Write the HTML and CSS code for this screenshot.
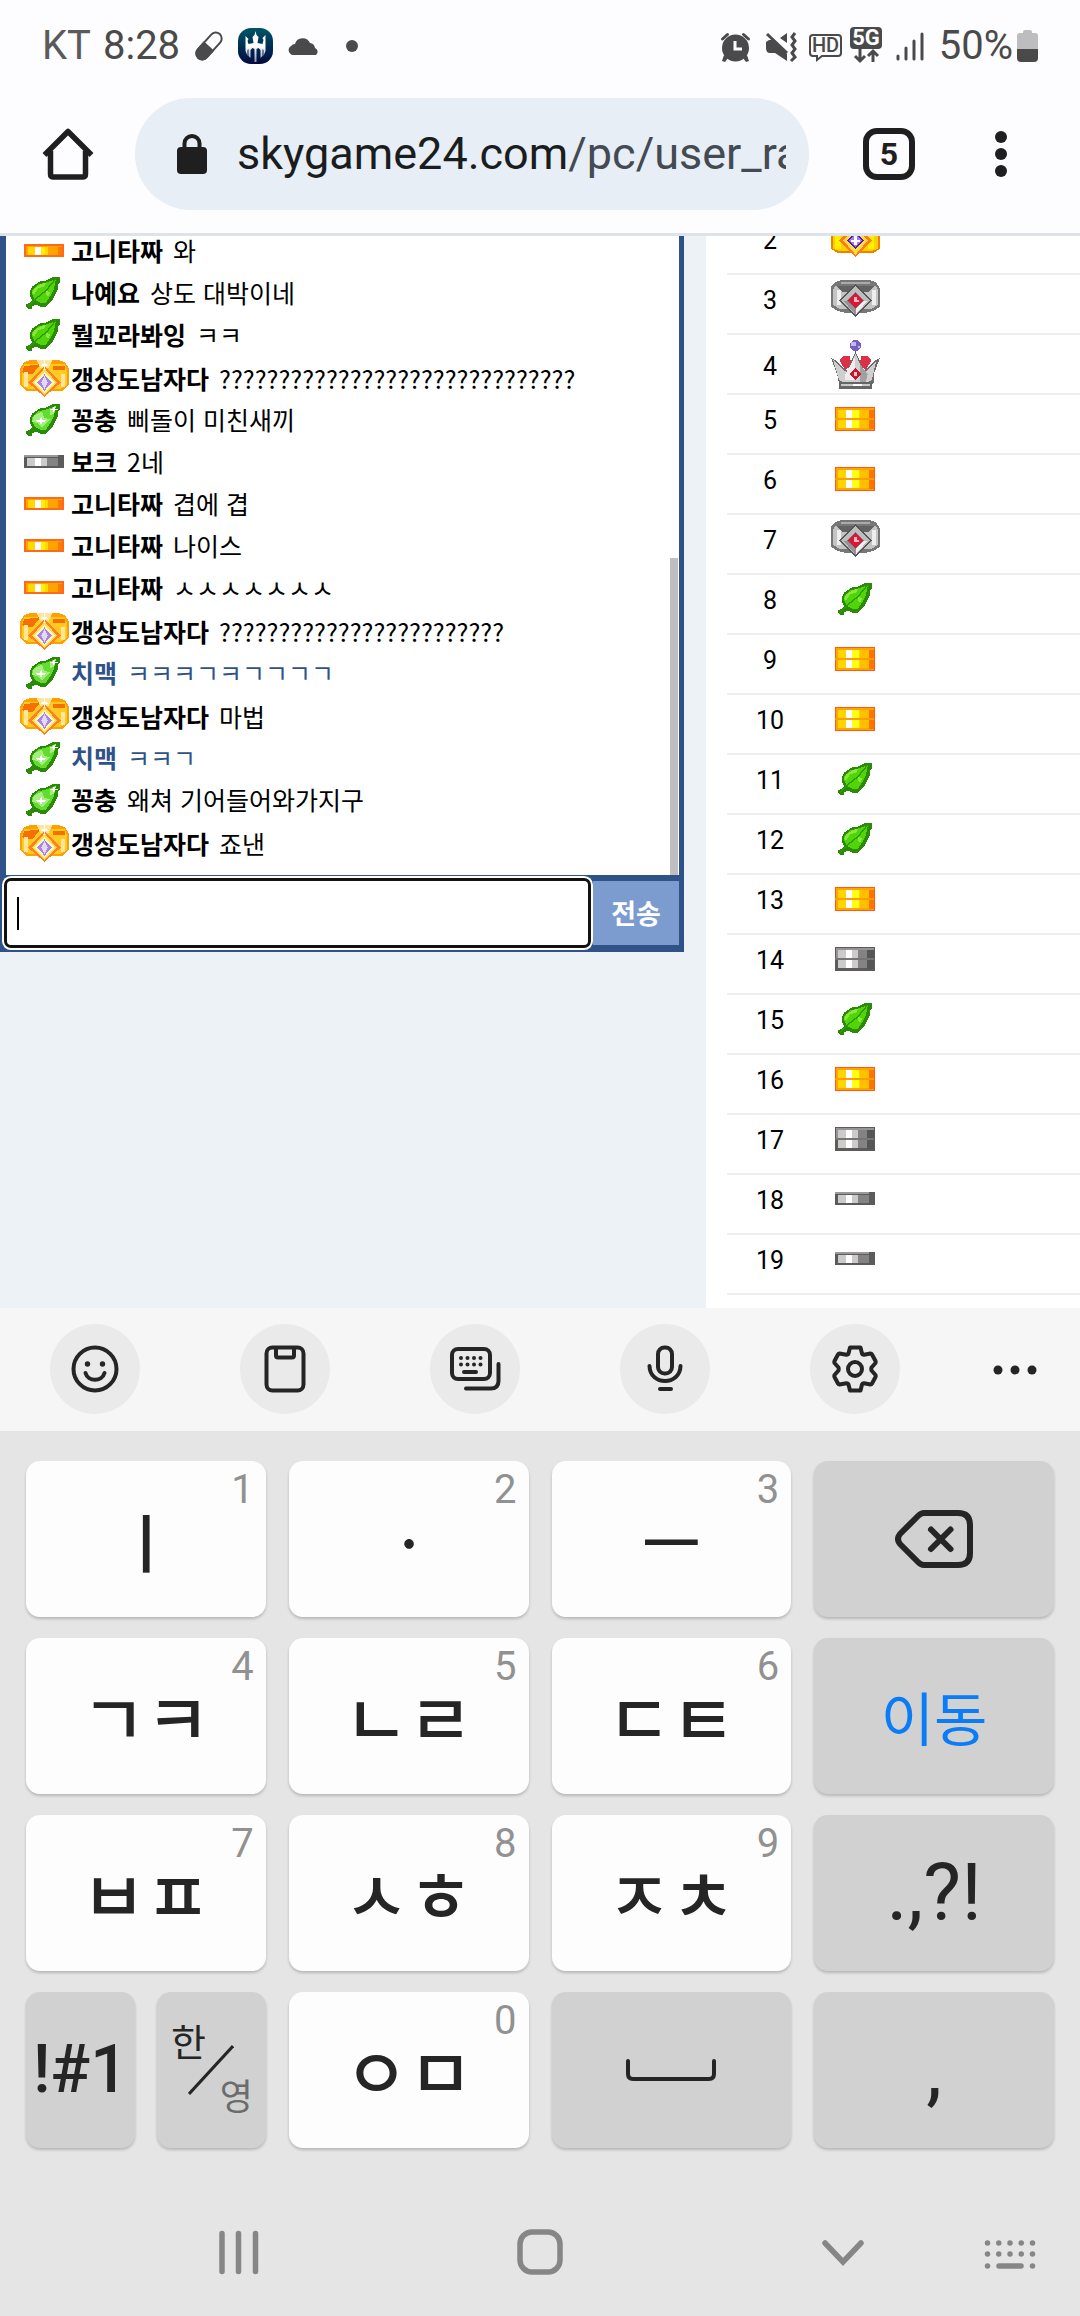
FILE: index.html
```html
<!DOCTYPE html>
<html lang="ko">
<head>
<meta charset="utf-8">
<meta name="viewport" content="width=device-width, initial-scale=1">
<title>skygame24.com</title>
<link rel="stylesheet" href="styles.css">
</head>
<body>
<svg class="defs" aria-hidden="true">
  <linearGradient id="app-bg" x1="0" y1="0" x2="0" y2="1"><stop offset="0" stop-color="#005566"/><stop offset="1" stop-color="#000a40"/></linearGradient>
  <linearGradient id="app-fg" x1="0" y1="0" x2="0" y2="1"><stop offset="0.5" stop-color="#fff"/><stop offset="1" stop-color="#8e97b5"/></linearGradient>
  <symbol id="leaf" viewBox="0 0 17 16">
    <path fill="#2b8a06" d="M17 0v3l-1 1v2l-1 2-1 2-1 2-2 2-1 1H7l-2-1-2 1v1H1l-1-1v-1l2-1 1-1-1-2V7l1-2 3-2 2-1h2l2-1 2-1z"/>
    <path fill="#52d507" d="M15 1l-1 5-2 4-2 3H7l-2-1-1-1-1-2V7l1-1 2-2 4-1 3-1z"/>
    <path fill="#8ae63f" d="M4 6l3-2 3-1-1 2-3 1-2 3-1-1zM10 7l2 1-1 2-1-1z"/>
    <path fill="none" stroke="#2f9a08" stroke-width=".7" d="M1 15l4-4 5-4 5-6"/>
  </symbol>
  <symbol id="leaf-shine" viewBox="0 0 17 16">
    <path fill="#2b8a06" d="M17 0v3l-1 1v2l-1 2-1 2-1 2-2 2-1 1H7l-2-1-2 1v1H1l-1-1v-1l2-1 1-1-1-2V7l1-2 3-2 2-1h2l2-1 2-1z"/>
    <path fill="#63dc31" d="M15 1l-1 5-2 4-2 3H7l-2-1-1-1-1-2V7l1-1 2-2 4-1 3-1z"/>
    <path fill="#a4ee7c" d="M4 6l4-2 1 3 3 1-2 2-2 2-2-2-3-1zM12 3l3-2-1 4-2 1z"/>
    <path fill="#fff" d="M7.500 6l.5 2 3 .7-3 .6-.5 2-.5-2-3-.6 3-.7zM14 1l.4 1.600L16 3l-1.600.4L14 5l-.4-1.600L12 3l1.600-.4z"/>
  </symbol>
  <symbol id="bar-gold" viewBox="0 0 40 13">
    <path fill="#ff6a1a" d="M0 0h40v13H0z"/><path fill="#ffa400" d="M2 2h36v9H2z"/><path fill="#ffd800" d="M4 3h20v8H4z"/><path fill="#fff200" d="M17 3h4v8h-4z"/><path fill="#fff" d="M11 3h6v8h-6z"/><path fill="#ff7a00" d="M34 3h4v8h-4z"/>
  </symbol>
  <symbol id="bar-silver" viewBox="0 0 40 13">
    <path fill="#5b5b5b" d="M0 0h40v13H0z"/><path fill="#9a9a9a" d="M0 0h34v2H0z"/><path fill="#cdcaca" d="M3 3h22v8H3z"/><path fill="#fff" d="M11 3h6v8h-6z"/><path fill="#848282" d="M23 3h11v8H23z"/>
  </symbol>
  <symbol id="bar2-gold" viewBox="0 0 40 24">
    <path fill="#ff5c12" d="M0 0h40v24H0z"/><path fill="#ffa300" d="M1 1h38v22H1z"/><path fill="#ffd500" d="M3 3h25v18H3z"/><path fill="#ffff14" d="M17 3h7v18h-7z"/><path fill="#fff" d="M11 3h6v18h-6z"/><path fill="#ffc000" d="M25 3h9v18h-9z"/><path fill="#ff7400" d="M34 3h5v19h-5z"/><path fill="#ff9d00" d="M0 11h39v2H0z"/>
  </symbol>
  <symbol id="bar2-silver" viewBox="0 0 40 24">
    <path fill="#5b5b5b" d="M0 0h40v24H0z"/><path fill="#969494" d="M1 1h38v10H1z"/><path fill="#cdcaca" d="M3 3h22v18H3z"/><path fill="#fff" d="M11 3h6v18h-6z"/><path fill="#848282" d="M23 3h11v18H23z"/><path fill="#555" d="M32 3h7v19h-7z"/><path fill="#757575" d="M0 11h39v2H0z"/>
  </symbol>
  <symbol id="ring-gold" viewBox="0 0 24 18">
    <path fill="#f08000" d="M2 1l3-1h14l3 1 2 3v10l-3 2H3l-3-2V4z"/>
    <path fill="#ffd000" d="M2 3h20l1 2v9l-3 1H4l-3-1V5z"/>
    <path fill="#ffef00" d="M2 6h3v8H2zM18 6h3v8h-3z"/>
    <path fill="#f45a00" d="M4 2h16v3H4z"/>
    <path fill="#ff7a1c" d="M12 2l8 8-8 8-8-8z"/>
    <path fill="#ffdc3c" d="M12 4l6 6-6 7-6-7z"/>
    <path fill="#4b1dc0" d="M12 6l4 4-4 4-4-4z"/><path fill="#a57bea" d="M12 7l3 3-3 3-3-3z"/><path fill="#fff" d="M11.500 8h1v4h-1zM10 9.500h4v1h-4z"/>
  </symbol>
  <symbol id="ring-shine" viewBox="0 0 24 18">
    <path fill="#ffa000" d="M2 1l3-1h14l3 1 2 3v8l-3 3H3l-3-3V4z"/>
    <path fill="#ffcb22" d="M2 2h20l1 3v7l-3 2H4l-3-2V5z"/>
    <path fill="#f47000" d="M2 3l8-1-4 5-5-1zM16 3h6v2h-6z"/>
    <path fill="#ffe69c" d="M8 0h8l-2 4h-4zM2 6h2v7H2zM20 7h2v6h-2z"/>
    <path fill="#ff8020" d="M12 3l8 8-8 7-8-7z"/>
    <path fill="#ffe04a" d="M12 4l6 7-6 6-6-6z"/>
    <path fill="#fff3c4" d="M12 6l5 5-5 5-5-5z"/>
    <path fill="#a586e0" d="M12 7l3.500 4-3.500 4-3.500-4z"/><path fill="#e4d8fa" d="M12 8l1.500 3-1.500 3-1.500-3z"/>
    <path fill="#fff" d="M12 0l.5 2 2 .5-2 .5-.5 2-.5-2-2-.5 2-.5z"/>
  </symbol>
  <symbol id="ring-silver" viewBox="0 0 24 18">
    <path fill="#777" d="M2 1l3-1h14l3 1 2 3v9l-3 2-4 1H7l-4-1-3-2V3z"/>
    <path fill="#c4c4c4" d="M2 3h20l1 2v7l-3 2H4l-3-2V5z"/>
    <path fill="#efefef" d="M3 5h2v7H3zM20 5h2v7h-2z"/>
    <path fill="#aaa" d="M5 1h14v1H5z"/><path fill="#626262" d="M3 3h18l-3 3H6z"/>
    <path fill="#555" d="M12 2l8 8-8 8-8-8z"/>
    <path fill="#bdbdbd" d="M12 3l7 7-7 7-7-7z"/><path fill="#efefef" d="M12 10h6l-6 7z"/><path fill="#949494" d="M12 10v7l-6-7z"/>
    <path fill="#777" d="M12 6l4 4-4 4-4-4z"/><path fill="#e01535" d="M12 6.500l3.500 3.500-3.500 3.500L8.500 10z"/><path fill="#ffb9c2" d="M11.500 8.500h1v1h1v1h-2z"/>
  </symbol>
  <symbol id="crown" viewBox="0 0 24 24">
    <path fill="#db3045" d="M4 10l2-2h3l1 4-3 3zM20 10l-2-2h-3l-1 4 3 3z"/>
    <path fill="#6d6d6d" d="M0 9l2 1 4 4 2 1 3-7 1-2 1 2 3 7 2-1 4-4 2-1-3 8v4l-1 1H4l-1-5z"/>
    <path fill="#cfcfcf" d="M1 10l5 5 2 1 4-9 4 9 2-1 4-4-2 9-2 1H6l-2-1z"/>
    <path fill="#ededed" d="M7 17l5-9-1 12H7z"/><path fill="#a0a0a0" d="M14 12l4 5-1 4h-3z"/>
    <path fill="#666" d="M4 21h16v3H4z"/><path fill="#c9c9c9" d="M5 22h14v1H5z"/><path fill="#fff" d="M11 22h4v1h-4z"/>
    <circle cx="12" cy="3" r="2.700" fill="#7360c4"/><path fill="#c5b9f0" d="M10 1h2v2h-2zM13 3h1v1h-1z"/><path fill="#5a4bb0" d="M11.600 5.500h.8V7h-.8z"/>
    <path fill="#c9142f" d="M12 14l3 3-3 3-3-3z"/><path fill="#efc0c6" d="M11.500 16h1v2h-1z"/>
  </symbol>
</svg>

<div class="screen">
  <header class="status">
    <div class="status-left">
      <span class="carrier">KT</span>
      <time class="clock">8:28</time>
      <svg class="s-pill" viewBox="0 0 30 30"><g transform="rotate(-48 15 15)"><rect x="-1" y="9" width="32" height="12" rx="6" fill="none" stroke="#4a4a4a" stroke-width="2"/><path fill="#4a4a4a" d="M15 8H5a7 7 0 0 0 0 14h10z"/></g></svg>
      <svg class="s-app" viewBox="0 0 35 36"><rect width="35" height="36" rx="13" fill="url(#app-bg)"/><path fill="url(#app-fg)" d="M17.500 3l1 4 2 2-1 6 5 1 1-4-1-2 3-3v16l-2 5v-6l-1-1v7l-2 2v-8l-2-2-2 1v13h-2V21l-2-1-2 2v8l-2-2v-7l-1 1v6l-2-5V8l3 3-1 2 1 3 5-1-1-6 2-2z"/></svg>
      <svg class="s-cloud" viewBox="0 0 33 20"><path fill="#4a4a4a" d="M5 19a5 5 0 0 1-1-9 5 5 0 0 1 4-2 8 8 0 0 1 15-1 6 6 0 0 1 5 5 4 4 0 0 1 1 7z"/></svg>
      <svg class="s-dot" viewBox="0 0 12 12"><circle cx="6" cy="6" r="6" fill="#4a4a4a"/></svg>
    </div>
    <div class="status-right">
      <svg class="s-icon" viewBox="0 0 44 36"><g fill="#4a4a4a"><circle cx="22.500" cy="20" r="13.500"/><path d="M11 27l4 3-3 4-3-1zM34 27l-4 3 3 4 3-1z"/></g><path fill="none" stroke="#4a4a4a" stroke-width="3" stroke-linecap="round" d="M9.500 11l5-4.500M35.500 11l-5-4.500"/><path fill="none" stroke="#fdfdff" stroke-width="3" d="M22 13v8h7"/></svg>
      <svg class="s-icon" viewBox="0 0 44 36"><path fill="#4a4a4a" d="M30 5v10l-7-5zM9 14l3-2h3l15 14v7L18 25h-5q-4 0-4-5z"/><path fill="none" stroke="#4a4a4a" stroke-width="3" d="M10 6l20 19M38 5l-3 4 3 4-3 4 3 4-3 4 3 4-4 4"/></svg>
      <svg class="s-icon" viewBox="0 0 44 36"><path fill="none" stroke="#4a4a4a" stroke-width="2" d="M12 7h25q3 0 3 3v15q0 3-3 3H21l-5 4v-4h-4q-3 0-3-3V10q0-3 3-3z"/><text class="hd" x="24.500" y="24" text-anchor="middle">HD</text></svg>
      <svg class="s-icon" viewBox="0 0 44 36"><rect x="5" y="-1" width="32" height="22" rx="4" fill="#4a4a4a"/><text class="fiveg" x="21" y="17" text-anchor="middle">5G</text><path fill="none" stroke="#4a4a4a" stroke-width="3" d="M15 21v12M10 28l5 5 5-5M28 34V23M23 28l5-5 5 5"/></svg>
      <svg class="s-icon" viewBox="0 0 44 36"><path stroke="#4a4a4a" stroke-width="3" stroke-linecap="round" d="M9 28v3M17 20v11M25 13v18M33 6v25"/></svg>
      <span class="battery-text">50%</span>
      <svg class="s-battery" viewBox="0 0 21 32"><path fill="#bdbdc0" d="M6 2q0-2 2-2h5q2 0 2 2v1h3q3 0 3 3v13H0V6q0-3 3-3h3z"/><path fill="#4a4a4a" d="M0 19h21v9q0 4-4 4H4q-4 0-4-4z"/></svg>
    </div>
  </header>

  <nav class="browser" aria-label="브라우저">
    <button class="bare" aria-label="홈"><svg class="i-home" viewBox="0 0 52 52"><path fill="none" stroke="#1f1f1f" stroke-width="5.500" stroke-linejoin="round" d="M2.500 27L26 3.500 49.500 27"/><path fill="none" stroke="#1f1f1f" stroke-width="5.500" stroke-linejoin="round" d="M8.500 23v23q0 3 3 3h29q3 0 3-3V23"/></svg></button>
    <div class="omnibox">
      <svg class="i-lock" viewBox="0 0 30 40"><rect y="13" width="30" height="27" rx="4" fill="#1f1f1f"/><path fill="none" stroke="#1f1f1f" stroke-width="4" d="M7.500 14V9.500a7.500 7.500 0 0 1 15 0V14"/></svg>
      <span class="url">skygame24.com<span class="path">/pc/user_ra</span></span>
    </div>
    <button class="bare tabs" aria-label="탭"><span class="tab-count">5</span></button>
    <button class="bare" aria-label="메뉴"><svg class="i-menu" viewBox="0 0 12 46"><g fill="#1f1f1f"><circle cx="6" cy="6" r="6"/><circle cx="6" cy="23" r="6"/><circle cx="6" cy="40" r="6"/></g></svg></button>
  </nav>

  <main class="page">
    <section class="chat-col">
      <div class="chat">
        <div class="log">
          <ul class="messages">
            <li><svg class="badge bar"><use href="#bar-gold"/></svg><b>고니타짜</b><span>와</span></li>
            <li><svg class="badge leaf"><use href="#leaf"/></svg><b>나예요</b><span>상도 대박이네</span></li>
            <li><svg class="badge leaf"><use href="#leaf"/></svg><b>뭘꼬라봐잉</b><span>ㅋㅋ</span></li>
            <li class="tall"><svg class="badge ring"><use href="#ring-shine"/></svg><b>갱상도남자다</b><span>??????????????????????????????</span></li>
            <li><svg class="badge leaf"><use href="#leaf-shine"/></svg><b>꽁충</b><span>삐돌이 미친새끼</span></li>
            <li><svg class="badge bar"><use href="#bar-silver"/></svg><b>보크</b><span>2네</span></li>
            <li><svg class="badge bar"><use href="#bar-gold"/></svg><b>고니타짜</b><span>겹에 겹</span></li>
            <li><svg class="badge bar"><use href="#bar-gold"/></svg><b>고니타짜</b><span>나이스</span></li>
            <li><svg class="badge bar"><use href="#bar-gold"/></svg><b>고니타짜</b><span>ㅅㅅㅅㅅㅅㅅㅅ</span></li>
            <li class="tall"><svg class="badge ring"><use href="#ring-shine"/></svg><b>갱상도남자다</b><span>????????????????????????</span></li>
            <li class="blue"><svg class="badge leaf"><use href="#leaf-shine"/></svg><b>치맥</b><span>ㅋㅋㅋㄱㅋㄱㄱㄱㄱ</span></li>
            <li class="tall"><svg class="badge ring"><use href="#ring-shine"/></svg><b>갱상도남자다</b><span>마법</span></li>
            <li class="blue"><svg class="badge leaf"><use href="#leaf-shine"/></svg><b>치맥</b><span>ㅋㅋㄱ</span></li>
            <li><svg class="badge leaf"><use href="#leaf-shine"/></svg><b>꽁충</b><span>왜쳐 기어들어와가지구</span></li>
            <li class="tall"><svg class="badge ring"><use href="#ring-shine"/></svg><b>갱상도남자다</b><span>죠낸</span></li>
          </ul>
          <div class="scroll-thumb"></div>
        </div>
        <form class="compose">
          <input class="compose-input" type="text" aria-label="메시지">
          <button class="send" type="button">전송</button>
        </form>
      </div>
    </section>
    <section class="rank-col">
      <table class="ranks">
        <tbody>
          <tr><td class="num">2</td><td class="tier"><svg class="badge ring"><use href="#ring-gold"/></svg></td><td></td></tr>
          <tr><td class="num">3</td><td class="tier"><svg class="badge ring"><use href="#ring-silver"/></svg></td><td></td></tr>
          <tr class="crowned"><td class="num">4</td><td class="tier"><svg class="badge crown"><use href="#crown"/></svg></td><td></td></tr>
          <tr><td class="num">5</td><td class="tier"><svg class="badge bar2"><use href="#bar2-gold"/></svg></td><td></td></tr>
          <tr><td class="num">6</td><td class="tier"><svg class="badge bar2"><use href="#bar2-gold"/></svg></td><td></td></tr>
          <tr><td class="num">7</td><td class="tier"><svg class="badge ring"><use href="#ring-silver"/></svg></td><td></td></tr>
          <tr><td class="num">8</td><td class="tier"><svg class="badge leaf"><use href="#leaf"/></svg></td><td></td></tr>
          <tr><td class="num">9</td><td class="tier"><svg class="badge bar2"><use href="#bar2-gold"/></svg></td><td></td></tr>
          <tr><td class="num">10</td><td class="tier"><svg class="badge bar2"><use href="#bar2-gold"/></svg></td><td></td></tr>
          <tr><td class="num">11</td><td class="tier"><svg class="badge leaf"><use href="#leaf"/></svg></td><td></td></tr>
          <tr><td class="num">12</td><td class="tier"><svg class="badge leaf"><use href="#leaf"/></svg></td><td></td></tr>
          <tr><td class="num">13</td><td class="tier"><svg class="badge bar2"><use href="#bar2-gold"/></svg></td><td></td></tr>
          <tr><td class="num">14</td><td class="tier"><svg class="badge bar2"><use href="#bar2-silver"/></svg></td><td></td></tr>
          <tr><td class="num">15</td><td class="tier"><svg class="badge leaf"><use href="#leaf"/></svg></td><td></td></tr>
          <tr><td class="num">16</td><td class="tier"><svg class="badge bar2"><use href="#bar2-gold"/></svg></td><td></td></tr>
          <tr><td class="num">17</td><td class="tier"><svg class="badge bar2"><use href="#bar2-silver"/></svg></td><td></td></tr>
          <tr><td class="num">18</td><td class="tier"><svg class="badge bar"><use href="#bar-silver"/></svg></td><td></td></tr>
          <tr><td class="num">19</td><td class="tier"><svg class="badge bar"><use href="#bar-silver"/></svg></td><td></td></tr>
        </tbody>
      </table>
    </section>
  </main>

  <section class="keyboard" aria-label="키보드">
    <div class="tools">
      <button class="tool" aria-label="이모지"><svg viewBox="-24 -24 48 48"><g fill="none" stroke="#252525" stroke-width="4" stroke-linecap="round"><circle r="21.500"/><path d="M-9.500 4C-7 13 7 13 9.500 4"/></g><g fill="#252525"><circle cx="-7.500" cy="-5" r="2.700"/><circle cx="7.500" cy="-5" r="2.700"/></g></svg></button>
      <button class="tool" aria-label="클립보드"><svg viewBox="-24 -24 48 48"><g fill="none" stroke="#252525" stroke-width="4"><rect x="-18.500" y="-21.500" width="37" height="43" rx="6"/><path d="M-9-21v7.500q0 2 2 2H7q2 0 2-2V-21"/></g></svg></button>
      <button class="tool" aria-label="키보드 모드"><svg viewBox="-26 -24 52 48"><g fill="none" stroke="#252525" stroke-width="4" stroke-linecap="round"><rect x="-23" y="-20" width="38" height="30" rx="6"/><path d="M23.500-5v17q0 7.500-8 7.500H-9"/><path d="M-11 3H1"/></g><g fill="#252525"><circle cx="-14" cy="-11" r="2"/><circle cx="-7.500" cy="-11" r="2"/><circle cx="-1" cy="-11" r="2"/><circle cx="5.500" cy="-11" r="2"/><circle cx="-14" cy="-4.500" r="2"/><circle cx="-7.500" cy="-4.500" r="2"/><circle cx="-1" cy="-4.500" r="2"/><circle cx="5.500" cy="-4.500" r="2"/></g></svg></button>
      <button class="tool" aria-label="음성 입력"><svg viewBox="-24 -24 48 48"><g fill="none" stroke="#252525" stroke-width="4" stroke-linecap="round"><rect x="-7" y="-21.500" width="14" height="26" rx="6.500"/><path d="M-15.500-3C-15 17 15 17 15.500-3M-5 20H6"/></g></svg></button>
      <button class="tool" aria-label="설정"><svg viewBox="-24 -24 48 48"><g fill="none" stroke="#252525" stroke-width="4" stroke-linejoin="round"><circle r="7"/><path d="M-5-21.500H5.500L7-15.500Q7.500-14 9-14.200L15.500-15.500Q16.500-15.500 17-14.500L20.500-8Q21-7 20.500-6L16.500-1.500Q16 0 16.500 1.500L20.500 6Q21 7 20.500 8L17 14.500Q16.500 15.500 15.500 15.500L9 14.200Q7.500 14 7 15.500L5.500 21.500H-5L-6.500 15.500Q-7 14-8.500 14.200L-15.500 15.500Q-16.500 15.500-17 14.500L-20.500 8Q-21 7-20.500 6L-16.500 1.500Q-16 0-16.500-1.500L-20.500-6Q-21-7-20.500-8L-17-14.500Q-16.500-15.500-15.500-15.500L-8.500-14.200Q-7-14-6.500-15.500Z"/></g></svg></button>
      <button class="tool plain" aria-label="더보기"><svg viewBox="-24 -24 48 48"><g fill="#252525"><circle cx="-17" cy="1" r="4.500"/><circle cy="1" r="4.500"/><circle cx="17" cy="1" r="4.500"/></g></svg></button>
    </div>
    <div class="keys">
      <button class="key vowel">ㅣ<span class="hint">1</span></button>
      <button class="key vowel">ㆍ<span class="hint">2</span></button>
      <button class="key vowel">ㅡ<span class="hint">3</span></button>
      <button class="key dark" aria-label="지우기"><svg class="i-del" viewBox="0 0 78 58"><g fill="none" stroke="#252525" stroke-width="6" stroke-linecap="round" stroke-linejoin="round"><path d="M29 3H63q12 0 12 12V43q0 12-12 12H29Q26 55 23 52L5 34Q1 29 5 24L23 6Q26 3 29 3Z"/><path d="M36 19.500L55.500 39M55.500 19.500L36 39"/></g></svg></button>
      <button class="key">ㄱㅋ<span class="hint">4</span></button>
      <button class="key">ㄴㄹ<span class="hint">5</span></button>
      <button class="key">ㄷㅌ<span class="hint">6</span></button>
      <button class="key dark go">이동</button>
      <button class="key">ㅂㅍ<span class="hint">7</span></button>
      <button class="key">ㅅㅎ<span class="hint">8</span></button>
      <button class="key">ㅈㅊ<span class="hint">9</span></button>
      <button class="key dark punct">.,?!</button>
      <div class="pair">
        <button class="key dark symbols">!#1</button>
        <button class="key dark lang"><span class="ko">한</span><svg class="slash" viewBox="0 0 46 50"><path stroke="#252525" stroke-width="3" d="M1 49L45 1"/></svg><span class="en">영</span></button>
      </div>
      <button class="key">ㅇㅁ<span class="hint">0</span></button>
      <button class="key dark" aria-label="스페이스"><svg class="i-space" viewBox="0 0 90 22"><path fill="none" stroke="#252525" stroke-width="4" stroke-linecap="round" d="M2 2v13q0 5 5 5h76q5 0 5-5V2"/></svg></button>
      <button class="key dark punct">,</button>
    </div>
    <div class="system-nav">
      <button class="bare" aria-label="최근 앱"><svg class="i-nav" viewBox="-24 -24 48 48"><path stroke="#868686" stroke-width="5.500" stroke-linecap="round" d="M-16-18.500v38M.5-18.500v38M17.500-18.500v38"/></svg></button>
      <button class="bare" aria-label="홈"><svg class="i-nav" viewBox="-24 -24 48 48"><rect x="-20" y="-20" width="40" height="40" rx="12" fill="none" stroke="#868686" stroke-width="5.500"/></svg></button>
      <button class="bare hide-key" aria-label="닫기"><svg class="i-nav" viewBox="-24 -24 48 48"><path fill="none" stroke="#868686" stroke-width="5.500" stroke-linecap="round" d="M-18-9L0 10 18-9"/></svg></button>
      <button class="bare" aria-label="키보드 선택"><svg class="i-kbd" viewBox="0 0 52 36"><g fill="none" stroke="#868686" stroke-width="5.500" stroke-linecap="round"><path stroke-dasharray="0 11.250" d="M3.500 9h46M3.500 20h46"/><path d="M3.500 32h0M48.500 32h0M15 32h22"/></g></svg></button>
    </div>
  </section>
</div>
</body>
</html>
```
FILE: styles.css
```css
* { box-sizing: border-box; }
body { margin: 0; font-family: Roboto, "Noto Sans CJK KR", sans-serif; background: #e5e5e5; color: #000; }
button { font: inherit; color: inherit; border: 0; padding: 0; margin: 0; background: none; }
svg { display: block; flex: none; }
.defs { position: absolute; width: 0; height: 0; }
.screen { min-height: 100vh; display: flex; flex-direction: column; }
.bare { display: flex; align-items: center; justify-content: center; height: 100%; width: 100%; }

/* status bar */
.status { height: 92px; padding: 0 42px; display: flex; justify-content: space-between; align-items: center; background: #fdfdff; color: #4a4a4a; font-size: 40px; line-height: 48px; }
.status-left, .status-right { display: flex; align-items: center; }
.status-left { gap: 14px; }
.carrier { margin-right: -2px; color: #5a5a5a; }
.s-pill { width: 30px; height: 30px; overflow: visible; }
.s-app { width: 35px; height: 36px; }
.s-cloud { width: 33px; height: 20px; }
.s-dot { width: 12px; height: 12px; margin-left: 12px; }
.s-icon { width: 44px; height: 36px; overflow: visible; }
.s-battery { width: 21px; height: 32px; margin-left: 4px; }
.battery-text { margin-left: 6px; }
.hd { font: 500 20px Roboto, sans-serif; fill: #4a4a4a; }
.fiveg { font: 700 22px Roboto, sans-serif; fill: #fdfdff; }

/* browser toolbar */
.browser { height: 144px; padding: 6px 47px 23px 0; display: grid; grid-template-columns: 135px 1fr 160px 64px; background: #fdfdff; border-bottom: 3px solid #dee2e9; }
.i-home { width: 52px; height: 52px; }
.omnibox { min-width: 0; padding: 0 23px 0 42px; display: flex; align-items: center; gap: 30px; border-radius: 56px; background: #e7eef5; }
.i-lock { width: 30px; height: 40px; }
.url { flex: 1; min-width: 0; overflow: hidden; white-space: nowrap; font-size: 45px; line-height: 56px; color: #1a1d20; }
.path { color: #434a52; }
.tab-count { width: 52px; height: 52px; border: 6px solid #1f1f1f; border-radius: 14px; font-size: 32px; font-weight: 700; line-height: 40px; text-align: center; color: #1f1f1f; }
.i-menu { width: 12px; height: 46px; }

/* web page */
.page { flex: 1; min-height: 0; display: grid; grid-template-columns: 706fr 374fr; background: #edf2f6; }
.chat-col { padding-right: 22px; min-width: 0; }
.chat { background: #2f5388; padding: 0 5px 7px 6px; }
.log { display: flex; justify-content: space-between; height: 639px; background: #fff; overflow: hidden; padding-right: 1px; }
.messages { list-style: none; margin: 0; padding: 0 0 12px 14px; display: flex; flex-direction: column; justify-content: flex-end; font-family: "Noto Sans CJK KR", sans-serif; font-size: 25px; line-height: 28px; }
.messages li { flex: none; height: 42px; display: flex; align-items: center; white-space: nowrap; }
.messages .tall { height: 43px; padding-top: 3px; }
.messages b { margin: 0 10px 0 2px; }
.messages .blue { color: #2f5388; }
.scroll-thumb { width: 8px; height: 317px; align-self: flex-end; background: #bfbfbf; }
.badge { shape-rendering: crispEdges; }
.messages .bar { margin: 0 5px 0 4px; }
.messages .leaf { margin: 0 9px 0 6px; }
.badge.bar { width: 40px; height: 13px; }
.badge.bar2 { width: 40px; height: 24px; }
.badge.leaf { width: 34px; height: 33px; }
.badge.ring { width: 49px; height: 37px; }
.badge.crown { width: 49px; height: 50px; }
.compose { display: flex; margin: 0; padding-top: 6px; gap: 5px; }
.compose-input { flex: 1; min-width: 0; height: 64px; margin-left: 1px; border: 0; border-radius: 4px; outline: 0; padding: 0 12px; font-size: 25px; background: #fff linear-gradient(#000, #000) no-repeat 10px 16px / 2px 33px; box-shadow: 0 0 0 3px #121212, 0 0 0 5px #fff; }
.send { width: 86px; height: 64px; background: #7c9cd0; color: #fff; font: 700 27px/36px "Noto Sans CJK KR", sans-serif; }

.rank-col { min-width: 0; background: #fff; padding: 0 0 13px 21px; display: flex; flex-direction: column; justify-content: flex-end; overflow: hidden; height: 1072px; }
.ranks { flex: none; width: 100%; table-layout: fixed; border-collapse: collapse; font-size: 25px; line-height: 30px; }
.ranks tr { height: 60px; border-bottom: 2px solid #eee; }
.ranks td { padding: 0; }
.ranks .num { width: 86px; text-align: center; padding-bottom: 6px; }
.ranks .tier { width: 84px; padding-bottom: 11px; }
.ranks .badge { margin: 0 auto; }
.ranks .crowned .num { padding: 6px 0 0; }
.ranks .crowned .tier { padding: 0; }

/* keyboard */
.keyboard { background: #e5e5e5; }
.tools { height: 123px; padding-top: 16px; display: grid; grid-template-columns: repeat(5, 19fr) 13fr; justify-items: center; background: #f6f6f6; }
.tool { width: 90px; height: 90px; border-radius: 50%; background: #eaeaea; display: flex; align-items: center; justify-content: center; }
.tool.plain { background: none; }
.tool svg { height: 48px; }
.keys { padding: 30px 26px 40px; display: grid; grid-template-columns: repeat(4, 1fr); gap: 21px 23px; }
.pair { display: grid; grid-template-columns: 1fr 1fr; gap: 22px; }
.key { position: relative; height: 156px; border-radius: 14px; background: #fdfdfd; box-shadow: 0 2px 3px rgba(0, 0, 0, .2); display: flex; align-items: center; justify-content: center; color: #252525; font: 500 70px/80px "Noto Sans CJK KR", sans-serif; }
.key.vowel { font-size: 64px; }
.key.dark { background: #d1d1d1; }
.key.punct { font: 400 80px/80px Roboto, sans-serif; }
.key.symbols { font: 500 66px/80px Roboto, sans-serif; }
.key.go { color: #0a7cf5; font-size: 58px; font-weight: 400; }
.hint { position: absolute; top: 6px; right: 12px; font: 400 40px/46px Roboto, sans-serif; color: #919191; }
.i-del { width: 78px; height: 58px; }
.i-space { width: 90px; height: 22px; }
.key.lang { font-size: 38px; line-height: 40px; font-weight: 400; }
.ko { position: absolute; left: 14px; top: 28px; }
.en { position: absolute; right: 13px; bottom: 34px; font-size: 36px; line-height: 40px; color: #6c6c6c; }
.slash { width: 46px; height: 50px; }
.system-nav { height: 128px; display: grid; grid-template-columns: 475fr 130fr 335fr 140fr; }
.hide-key { padding-left: 141px; }
.i-nav { width: 48px; height: 48px; }
.i-kbd { width: 52px; height: 36px; }
```
